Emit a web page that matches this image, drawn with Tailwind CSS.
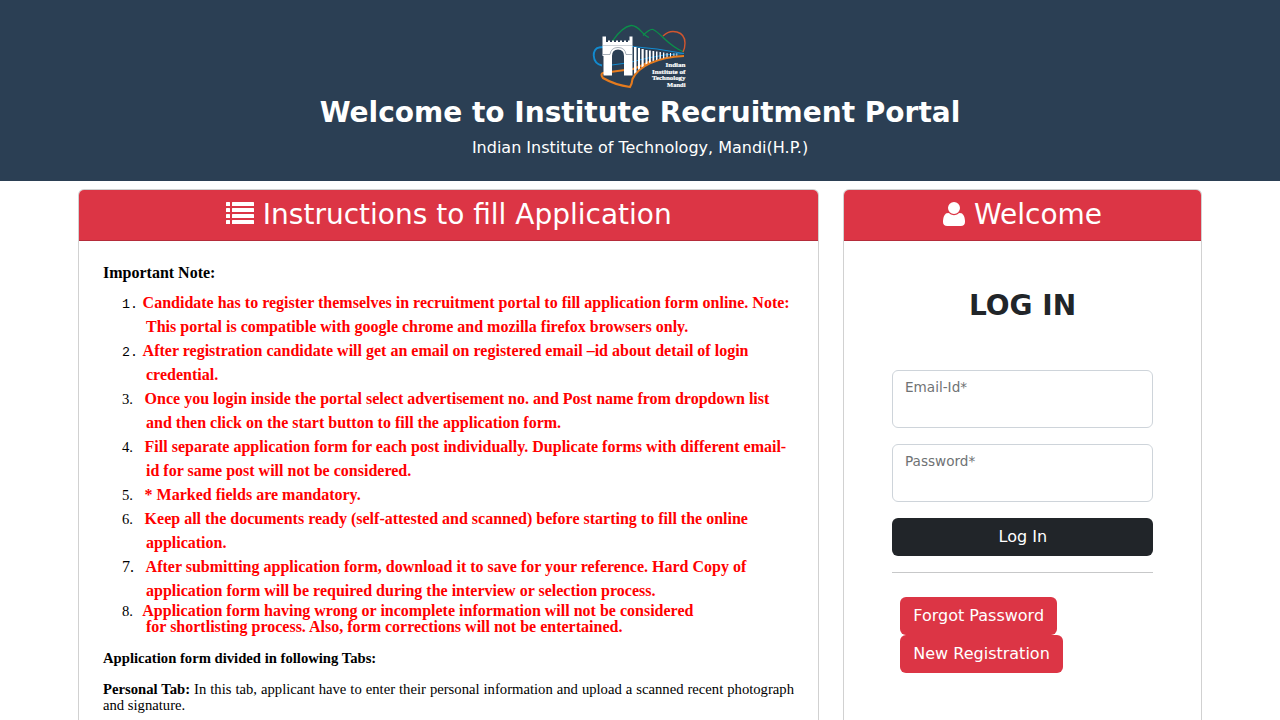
<!DOCTYPE html>
<html lang="en">
<head>
<meta charset="utf-8">
<title>Institute Recruitment Portal</title>
<script src="https://cdn.jsdelivr.net/npm/@tailwindcss/browser@4"></script>
</head>
<body class="h-[720px] overflow-hidden bg-white font-['DejaVu_Sans',sans-serif] text-base text-[#212529]">
<header class="flex h-[181px] flex-col items-center bg-[#2b3f54] pt-6 text-white">
  <svg class="h-[65px] w-24 shrink-0" viewBox="592 24 96 65" fill="none">
    <path d="M602 65.500C591 63 592 48 599 47.500L604 47" stroke="#128bd0" stroke-width="1.900"/>
    <path d="M632 46.500Q656 48 684 53.500Q664 54 648 58Q628 64 604 66" stroke="#128bd0" stroke-width="1"/>
    <path d="M612.500 41Q622 27 631 25.500C639 25 642 35 649 37.500M643 35.500Q650 28.500 653 29.500C661 33 668 46 684 52" stroke="#0b8f4a" stroke-width="1.300"/>
    <path d="M663 36C671 28 685 31 685 43Q685 48 683 52" stroke="#d1562f" stroke-width="1.400"/>
    <path d="M684 56C656 57 638 67 632.500 79Q632 84 630 87Q615 85 603 78Q600 74 603 73Q617 71 633 69Q642 66 651 61" stroke="#e57b1e" stroke-width="2.100"/>
    <path fill="#fff" fill-rule="evenodd" d="M602.500 36.500H606V42H608V40.500H610V42H612V40.500H614V42H616V40.500H618V42H620V40.500H622V42H624V40.500H626V42H628V40.500H629.500V36.500H632.500V75.500H624V56Q624 49.500 618 49.500Q612 49.500 612 56V75.500H603.500V56H602.500Z"/>
    <path d="M603 54.500H610Q611 47.500 618 47.500Q625 47.500 626 54.500H632" stroke="#6d7b89" stroke-width=".6"/>
    <path d="M603 45.500H632" stroke="#9ba5ae" stroke-width=".5"/>
    <path fill="#fff" d="M634 47h2.500v25l-2.500 2zM638 48h2v20.500l-2 1.500zM641.500 49h2.200v17l-2.200 1.500zM645.500 50h2v13.500l-2 1zM649 50.500h1.800V62l-1.800 1zM652.500 51h1.700v9.500l-1.700.8zM656 51.500h1.500v8l-1.500.7zM659.500 52h1.400v6.500l-1.400.7zM663 52.500h1.300V58l-1.300.5zM666.500 53h1.100v4l-1.100.5zM670 53h1v3.500l-1 .3zM673.500 53.200h.8v2.800h-.8zM676.500 53.300h.7v2.500h-.7z"/>
    <g fill="#fff" stroke="#fff" stroke-width=".2" font-family="Liberation Serif, serif" font-weight="700" font-size="7" text-anchor="end">
      <text x="685.500" y="67" textLength="20" lengthAdjust="spacingAndGlyphs">Indian</text>
      <text x="685.500" y="73.700" textLength="33.500" lengthAdjust="spacingAndGlyphs">Institute of</text>
      <text x="685.500" y="80.200" textLength="33.500" lengthAdjust="spacingAndGlyphs">Technology</text>
      <text x="685.500" y="87.200" textLength="18.500" lengthAdjust="spacingAndGlyphs">Mandi</text>
    </g>
  </svg>
  <h1 class="mt-[7px] text-[28px] leading-[34px] font-bold whitespace-nowrap">Welcome to Institute Recruitment Portal</h1>
  <p class="mt-1.5 leading-6">Indian Institute of Technology, Mandi(H.P.)</p>
</header>
<main class="flex gap-6 px-[78px] pt-2">
  <section class="h-[531px] w-[741px] shrink-0 overflow-hidden rounded-t-md border border-b-0 border-black/[.175]">
    <h2 class="flex h-[51px] items-center justify-center gap-[9px] border-b border-[#b52c3a] bg-[#dc3545] pl-[.6px] text-[28px] leading-[34px] text-white">
      <svg class="h-[22px] w-7 -translate-y-[2px]" viewBox="0 0 28 22" fill="currentColor"><rect width="4" height="4" rx=".5"/><rect x="6" width="22" height="4" rx=".5"/><rect y="6" width="4" height="4" rx=".5"/><rect x="6" y="6" width="22" height="4" rx=".5"/><rect y="12" width="4" height="4" rx=".5"/><rect x="6" y="12" width="22" height="4" rx=".5"/><rect y="18" width="4" height="4" rx=".5"/><rect x="6" y="18" width="22" height="4" rx=".5"/></svg>
      <span>Instructions to fill Application</span>
    </h2>
    <div class="px-6 pt-5 font-['Liberation_Serif',serif] text-black">
      <p class="leading-6 font-bold">Important Note:</p>
      <ol class="mt-1.5 pl-[43px] leading-6 font-bold whitespace-nowrap text-[#ff0000] [&>li]:-indent-6">
        <li><span class="inline-block w-[20.6px] indent-0 align-baseline font-['Liberation_Mono',monospace] text-[13.333px] leading-none font-normal text-black">1.</span>Candidate has to register themselves in recruitment portal to fill application form online. Note:<br>This portal is compatible with google chrome and mozilla firefox browsers only.</li>
        <li><span class="inline-block w-[20.6px] indent-0 align-baseline font-['Liberation_Mono',monospace] text-[13.333px] leading-none font-normal text-black">2.</span>After registration candidate will get an email on registered email –id about detail of login<br>credential.</li>
        <li><span class="inline-block w-[22.600px] indent-0 text-[14.667px] leading-none font-normal text-black">3.</span>Once you login inside the portal select advertisement no. and Post name from dropdown list<br>and then click on the start button to fill the application form.</li>
        <li><span class="inline-block w-[22.600px] indent-0 text-[14.667px] leading-none font-normal text-black">4.</span>Fill separate application form for each post individually. Duplicate forms with different email-<br>id for same post will not be considered.</li>
        <li><span class="inline-block w-[22.600px] indent-0 text-[14.667px] leading-none font-normal text-black">5.</span>* Marked fields are mandatory.</li>
        <li><span class="inline-block w-[22.600px] indent-0 text-[14.667px] leading-none font-normal text-black">6.</span>Keep all the documents ready (self-attested and scanned) before starting to fill the online<br>application.</li>
        <li><span class="inline-block w-[23.600px] indent-0 leading-none font-normal text-black">7.</span>After submitting application form, download it to save for your reference. Hard Copy of<br>application form will be required during the interview or selection process.</li>
        <li class="leading-4"><span class="inline-block w-[20.300px] indent-0 text-[14.667px] leading-none font-normal text-black">8.</span>Application form having wrong or incomplete information will not be considered<br>for shortlisting process. Also, form corrections will not be entertained.</li>
      </ol>
      <p class="mt-[15px] text-[14.667px] leading-4 font-bold">Application form divided in following Tabs:</p>
      <p class="mt-[15px] text-justify text-[14.667px] leading-4"><b>Personal Tab:</b> In this tab, applicant have to enter their personal information and upload a scanned recent photograph and signature.</p>
    </div>
  </section>
  <section class="h-[531px] w-[359px] shrink-0 overflow-hidden rounded-t-md border border-b-0 border-black/[.175]">
    <h2 class="flex h-[51px] items-center justify-center gap-[9px] border-b border-[#b52c3a] bg-[#dc3545] text-[28px] leading-[34px] text-white">
      <svg class="h-6 w-[22px] -translate-y-px" viewBox="0 0 1408 1536" fill="currentColor"><path transform="translate(0 1408) scale(1 -1)" d="M1408 131q0-120-73-189.500t-194-69.500h-874q-121 0-194 69.500t-73 189.500q0 53 3.500 103.500t14 109 26.500 108.500 43 97.500 62 81 85.500 53.500 111.500 20q9 0 42-21.500t74.500-48 108-48 133.500-21.500 133.500 21.500 108 48 74.500 48 42 21.500q61 0 111.500-20t85.500-53.500 62-81 43-97.500 26.500-108.500 14-109 3.500-103.500zM1088 1024q0-159-112.500-271.500t-271.500-112.500-271.500 112.500-112.500 271.500 112.500 271.500 271.500 112.500 271.500-112.500 112.500-271.500z"/></svg>
      <span>Welcome</span>
    </h2>
    <form class="flex flex-col px-12 pt-12">
      <h3 class="mb-12 text-center text-[28px] leading-[33px] font-bold">LOG IN</h3>
      <label class="mb-4 block h-[58px] rounded-md border border-[#ced4da] px-3 pt-1.5 text-[13.600px] leading-5 text-[#6f7274]">Email-Id*</label>
      <label class="mb-4 block h-[58px] rounded-md border border-[#ced4da] px-3 pt-1.5 text-[13.600px] leading-5 text-[#6f7274]">Password*</label>
      <button type="button" class="h-[38px] rounded-md bg-[#212529] pl-[.7px] leading-6 text-white">Log In</button>
      <hr class="mt-4 border-t border-[#c7c8c9]">
      <div class="mt-6 flex flex-col items-start pl-[8.300px] text-white">
        <button type="button" class="h-[38px] rounded-md bg-[#dc3545] px-[13px] leading-6 whitespace-nowrap">Forgot Password</button>
        <button type="button" class="h-[38px] rounded-md bg-[#dc3545] px-[13px] leading-6 whitespace-nowrap">New Registration</button>
      </div>
    </form>
  </section>
</main>
</body>
</html>
